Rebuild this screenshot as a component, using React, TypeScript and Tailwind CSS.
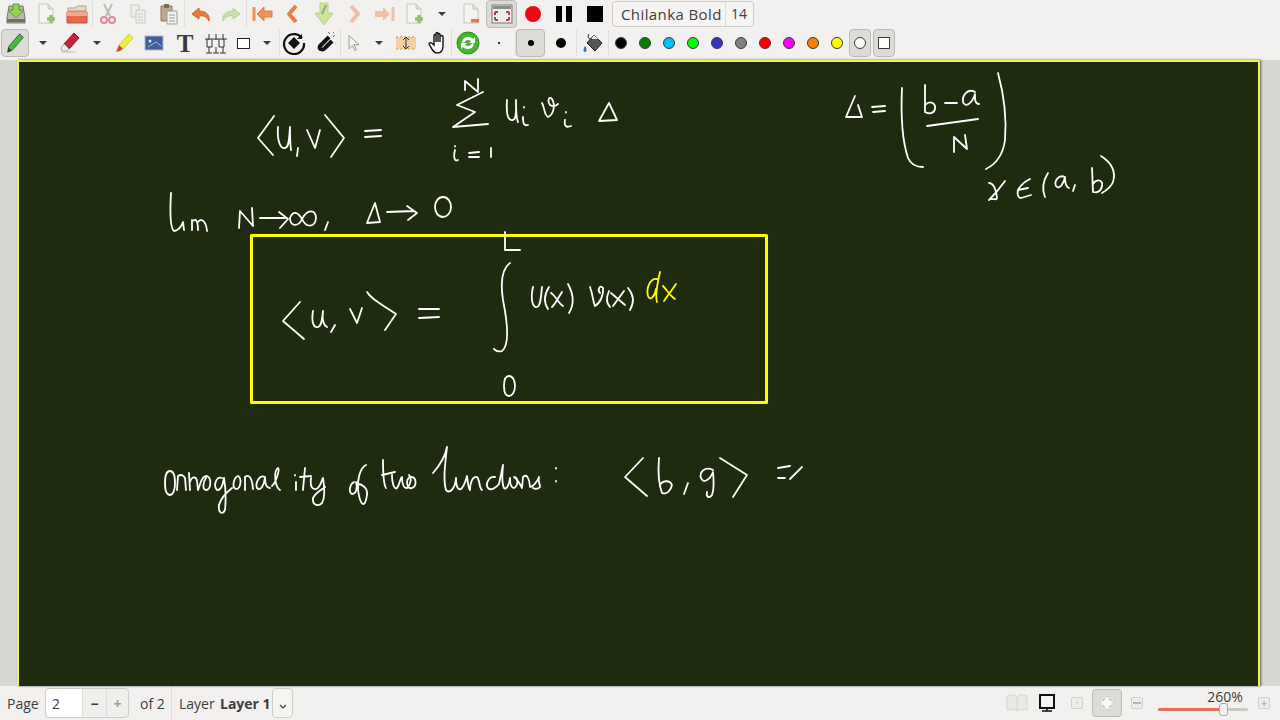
import type { ReactNode } from "react";

const WHITE_INK = [
  // <u,v> = sum
  "M274 116 L258 138 L273 155",
  "M278 127 C277 140 280 149 285 148 C290 147 289 135 290 127 C290 135 290 143 291 150",
  "M298 148 L297 156",
  "M307 130 L315 148 L320 130",
  "M325 115 L344 138 L331 157",
  "M365 131 L381 130 M365 137 L381 136",
  "M465 90 L465 81 L478 92 L478 79",
  "M483 92 L457 105 L475 112 L453 127 L488 124",
  "M507 100 C506 115 508 121 513 120 C517 119 516 108 516 100 C516 110 516 118 518 122",
  "M523 117 C523 124 524 126 528 125 M524 107 L524 107.5",
  "M542 103 C545 108 544 115 548 117 C553 115 556 106 552 99 C549 96 547 100 550 105 C553 107 556 106 558 104",
  "M565 120 C564 126 566 128 571 126 M566 112 L566 112.5",
  "M609 103 L599 121 L617 120 Z",
  "M455 150 C453 158 455 162 458 160 M455 146 L455 146.5",
  "M469 153 L479 152 M469 157 L479 157",
  "M491 148 L491 157",
  // lim
  "M171 193 C170 210 170 228 174 231 C177 231 181 228 183 222 L184 230",
  "M192 220 L192 230 M192 222 C195 218 198 219 198 230 M198 222 C201 218 206 220 207 231",
  "M239 228 L240 211 L253 226 L252 208",
  "M260 218 L285 218 M279 212 L288 219 L280 228",
  "M290 218 C293 210 298 212 302 219 C306 228 315 228 316 218 C316 209 307 209 302 219 C298 228 290 226 290 218",
  "M328 222 L325 230",
  "M375 203 L367 223 L380 222 Z",
  "M387 212 L414 211 M407 206 L417 213 L408 220",
  "M443 197 C448 197 451 202 451 207 C451 213 447 217 443 217 C438 217 435 212 435 207 C435 202 438 197 443 197",
  // boxed integral
  "M505 232 L505 250 L520 250",
  "M510 263 C503 268 500 280 503 300 C507 320 510 345 502 351 C499 352 496 351 494 349",
  "M300 302 L283 321 L304 339",
  "M313 311 C311 323 314 328 318 327 C322 326 322 318 323 311 C322 319 323 325 327 327",
  "M335 325 L331 332",
  "M350 309 L357 323 L362 308",
  "M367 292 C372 300 380 303 396 314 L385 330",
  "M419 309 L439 309 M419 318 L439 317",
  "M533 287 C530 300 533 308 537 307 C541 306 541 295 542 287",
  "M549 287 C544 295 544 303 548 309",
  "M551 293 C556 296 558 303 563 306 M562 292 C558 298 556 303 552 307",
  "M568 284 C574 295 574 305 569 313",
  "M590 287 C593 295 593 302 595 306 C600 303 604 295 603 288 C600 284 597 290 600 293",
  "M609 291 C606 298 606 303 610 307",
  "M611 293 L625 305 M624 291 L613 306",
  "M628 288 C634 295 634 303 630 310",
  "M509 376 C513 376 515 381 515 386 C515 392 512 396 509 396 C505 396 504 391 504 386 C504 381 505 376 509 376",
  // delta definition
  "M855 96 L846 117 L862 117 L858 105",
  "M872 107 L885 106 M873 112 L885 111",
  "M902 88 C901 110 902 140 908 158 C911 165 917 167 923 167",
  "M925 85 L925 112 M925 105 C930 100 936 103 935 109 C934 114 928 114 925 112",
  "M945 103 L957 103",
  "M975 92 C968 88 962 95 963 102 C965 108 972 104 975 94 C975 100 975 104 979 104",
  "M927 126 L978 119",
  "M954 152 L954 137 L967 149 L965 135",
  "M998 73 C1004 95 1007 115 1005 140 C1003 155 996 164 986 169",
  "M989 183 C994 183 996 190 997 198 C997 200 995 199 991 199 M1005 181 C1000 188 994 195 989 200",
  "M1030 179 C1024 182 1020 186 1018 190 L1028 188 M1018 190 C1017 194 1018 198 1021 198 L1031 195",
  "M1048 173 C1043 181 1042 190 1045 197",
  "M1065 177 C1058 174 1054 182 1056 186 C1059 190 1064 184 1065 177 C1065 183 1066 187 1069 188",
  "M1075 185 L1073 191",
  "M1092 168 L1093 192 M1093 184 C1097 178 1103 180 1102 186 C1101 192 1096 193 1093 192",
  "M1101 156 C1112 163 1116 172 1113 182 C1111 187 1107 190 1102 193",
  // orthogonality line
  "M170 471 C174 471 175 477 175 483 C175 490 173 495 170 495 C166 495 165 489 165 483 C165 477 166 471 170 471",
  "M177 490 L178 476 C181 474 183 475 185 478 L186 490 M189 473 L190 490 M190 482 C192 476 196 476 197 481 L198 490 C201 482 202 476 207 476 C212 478 211 490 206 490 C202 490 203 482 206 478",
  "M222 478 C216 476 213 486 217 490 C221 491 223 484 224 478 C226 490 226 500 225 510 C222 516 218 512 219 505 C221 497 227 492 232 488",
  "M238 476 C233 478 232 488 236 489 C241 489 242 478 238 476",
  "M245 490 L245 477 C248 474 252 476 253 489",
  "M265 477 C259 474 255 484 257 488 C261 492 264 484 265 478 C265 484 266 488 270 488",
  "M272 486 C276 482 280 470 278 468 C274 470 274 486 280 490",
  "M295 475 L295 475.5 M296 482 L296 490",
  "M305 468 L303 490 M300 477 L311 476",
  "M311 478 C310 486 312 490 316 489 C320 488 321 482 323 478 C325 490 325 498 322 503 C318 507 312 505 313 498 C316 492 322 490 325 487",
  "M354 482 C350 484 348 492 352 494 C356 494 358 488 356 482",
  "M366 465 C360 468 357 480 358 490 C360 505 365 510 367 495 C368 488 362 484 358 484",
  "M383 460 C383 472 384 485 386 488 M382 475 L395 472",
  "M392 475 C392 485 395 490 397 488 C400 484 400 478 402 477 C402 484 404 489 407 488 C411 484 412 478 409 475",
  "M410 477 C405 480 407 490 412 488 C417 486 417 476 410 477",
  "M433 473 C440 465 445 458 447 447 C445 465 443 480 446 490 C449 494 455 490 456 478 C456 486 458 492 462 488 C465 484 466 480 467 476 C468 482 468 488 470 490 C470 482 473 476 477 477 C480 480 479 488 482 490",
  "M495 477 C489 476 485 484 488 488 C491 491 496 488 499 484 L503 465 C502 475 502 484 504 488 C506 490 509 486 510 478 C510 484 511 488 514 488 C518 486 519 477 514 477 C518 480 520 484 522 488 L523 477 C526 474 529 476 530 487 C533 487 537 482 539 477 C538 482 540 484 540 487 C538 489 535 489 533 488",
  "M556 468 L556 468.5 M556 481 L556 481.5",
  // <f,g> =
  "M643 458 L625 477 L647 496",
  "M659 458 C658 470 659 485 662 493 C667 495 671 490 672 485 C670 480 663 480 660 485",
  "M688 483 L684 494",
  "M713 470 C705 466 699 472 701 478 C703 484 710 480 713 472 C714 482 714 490 712 495 C709 499 706 497 707 492",
  "M720 458 L747 475 L733 497",
  "M778 468 L790 466 M778 478 L785 478 M802 467 L790 479",
];

function Ink() {
  return (
    <svg
      className="pointer-events-none absolute inset-0 h-full w-full"
      viewBox="0 60 1280 626"
      preserveAspectRatio="none"
      fill="none"
      strokeLinecap="round"
      strokeLinejoin="round"
    >
      <rect x="251.5" y="235.5" width="515" height="167" stroke="#ffff00" strokeWidth="3" />
      {WHITE_INK.map((d) => (
        <path key={d} d={d} stroke="#ffffff" strokeWidth="1.8" />
      ))}
      <path
        d="M657 279 C650 278 646 288 648 296 C650 302 655 296 656 289 M660 272 C657 285 655 296 657 302 M663 286 C667 290 670 296 675 299 M676 284 C672 290 668 295 664 301"
        stroke="#ffff00"
        strokeWidth="1.8"
      />
    </svg>
  );
}

function Tool({ w, active, children }: { w: string; active?: boolean; children?: ReactNode }) {
  return (
    <div className={`${w} flex h-full shrink-0 items-center justify-center`}>
      {active ? (
        <div className="flex h-[28px] w-full items-center justify-center rounded-[4px] border border-[#bcbab5] bg-[#dcdbd8]">
          {children}
        </div>
      ) : (
        children
      )}
    </div>
  );
}

function Sep() {
  return <div className="h-[26px] w-px shrink-0 bg-[#dfdedb]" />;
}

function Drop() {
  return <div className="h-0 w-0 border-x-[4px] border-t-[4px] border-x-transparent border-t-[#3c3c3c]" />;
}

function Ico({ children, size = 24 }: { children: ReactNode; size?: number }) {
  return (
    <svg width={size} height={size} viewBox="0 0 24 24" fill="none">
      {children}
    </svg>
  );
}

const Page = ({ plus, red }: { plus?: boolean; red?: boolean }) => (
  <Ico>
    <path d="M5 2 H14 L19 7 V21 H5 Z" fill="#f4f4f2" stroke="#c4c4c0" />
    <path d="M14 2 V7 H19" fill="#dcdcd8" stroke="#c4c4c0" />
    {plus && <path d="M17 13 V21 M13 17 H21" stroke="#8cc06a" strokeWidth="3.4" />}
    {red && <rect x="12" y="17" width="8" height="3.5" fill="#e8735a" />}
  </Ico>
);

function Swatch({ color }: { color: string }) {
  return (
    <Tool w="w-[24px]">
      <div className={`h-[12px] w-[12px] rounded-full border border-[#3a3a3a] ${color}`} />
    </Tool>
  );
}

function TopRow() {
  return (
    <div className="flex h-[28px] items-center pl-[1px]">
      <Tool w="w-[29px]">
        <Ico>
          <path d="M3 16 L5 4 H19 L21 16 V21 H3 Z" fill="#b8b8b4" stroke="#77776f" />
          <path d="M9 2 H15 V8 H20 L12 16 L4 8 H9 Z" fill="#95d552" stroke="#5c9a2a" />
          <rect x="3" y="17" width="18" height="3" fill="#6f6f6a" />
        </Ico>
      </Tool>
      <Tool w="w-[31px]"><Page plus /></Tool>
      <Tool w="w-[31px]">
        <Ico>
          <path d="M3 6 H10 L12 4 H21 V9 H3 Z" fill="#e9d7c8" stroke="#b89d88" />
          <path d="M2 10 H22 V21 H2 Z" fill="#e8684a" stroke="#c05338" />
          <path d="M2 10 H22 V14 H2 Z" fill="#f2a890" />
        </Ico>
      </Tool>
      <Sep />
      <Tool w="w-[30px]">
        <Ico>
          <path d="M8 2 L14 14 M16 2 L10 14" stroke="#bcbcb8" strokeWidth="2" />
          <circle cx="8" cy="18" r="3" stroke="#d98ba0" strokeWidth="2" />
          <circle cx="16" cy="18" r="3" stroke="#d98ba0" strokeWidth="2" />
        </Ico>
      </Tool>
      <Tool w="w-[30px]">
        <Ico>
          <path d="M5 3 H13 V15 H5 Z" fill="#eeeeec" stroke="#c8c8c4" />
          <path d="M10 8 H19 V21 H10 Z" fill="#eeeeec" stroke="#c8c8c4" />
          <path d="M12 12 H17 M12 15 H17 M12 18 H17" stroke="#c8c8c4" />
        </Ico>
      </Tool>
      <Tool w="w-[31px]">
        <Ico>
          <path d="M4 4 H15 V19 H4 Z" fill="#bfa88d" stroke="#8e785f" />
          <rect x="7" y="2" width="5" height="4" fill="#7a6a58" />
          <path d="M10 9 H20 V22 H10 Z" fill="#f2f2f0" stroke="#9a9a96" />
          <path d="M12 13 H18 M12 16 H18 M12 19 H18" stroke="#9a9a96" />
        </Ico>
      </Tool>
      <Sep />
      <Tool w="w-[31px]">
        <Ico>
          <path d="M10 6 L3 12 L10 17 V14 C15 13 18 15 20 19 C21 12 16 9 10 9 Z" fill="#ef7a3c" stroke="#d95f22" />
        </Ico>
      </Tool>
      <Tool w="w-[30px]">
        <Ico>
          <path d="M14 6 L21 12 L14 17 V14 C9 13 6 15 4 19 C3 12 8 9 14 9 Z" fill="#c8e0a8" stroke="#b4d28e" />
        </Ico>
      </Tool>
      <Sep />
      <Tool w="w-[31px]">
        <Ico>
          <path d="M3 5 V19" stroke="#f0905a" strokeWidth="3" />
          <path d="M13 5 L6 12 L13 19 V15 H21 V9 H13 Z" fill="#f0905a" stroke="#e37b40" />
        </Ico>
      </Tool>
      <Tool w="w-[30px]">
        <Ico>
          <path d="M15 4 L8 12 L15 20" stroke="#ec7a45" strokeWidth="4" strokeLinejoin="round" />
        </Ico>
      </Tool>
      <Tool w="w-[31px]">
        <Ico>
          <path d="M8 1 H16 V11 H21 L12 23 L3 11 H8 Z" fill="#cfe49e" stroke="#b7d487" />
          <path d="M14 3 L10 12" stroke="#8cb07a" strokeWidth="2" />
        </Ico>
      </Tool>
      <Tool w="w-[30px]">
        <Ico>
          <path d="M9 4 L16 12 L9 20" stroke="#f3bfa3" strokeWidth="4" strokeLinejoin="round" />
        </Ico>
      </Tool>
      <Tool w="w-[30px]">
        <Ico>
          <path d="M21 5 V19" stroke="#f3bfa3" strokeWidth="3" />
          <path d="M11 5 L18 12 L11 19 V15 H3 V9 H11 Z" fill="#f3bfa3" />
        </Ico>
      </Tool>
      <Tool w="w-[30px]"><Page plus /></Tool>
      <Tool w="w-[26px]"><Drop /></Tool>
      <Tool w="w-[31px]"><Page red /></Tool>
      <Tool w="w-[31px]" active>
        <Ico>
          <rect x="2" y="3" width="20" height="18" fill="#eeeeec" stroke="#77776f" />
          <rect x="3" y="4" width="18" height="3" fill="#8d8d85" />
          <path d="M5 10 H8 M5 10 V13 M19 10 H16 M19 10 V13 M5 18 H8 M5 18 V15 M19 18 H16 M19 18 V15" stroke="#b0404a" strokeWidth="2" />
        </Ico>
      </Tool>
      <Tool w="w-[32px]"><div className="h-[16px] w-[16px] rounded-full bg-[#ee0a14]" /></Tool>
      <Tool w="w-[30px]">
        <div className="flex gap-[4px]">
          <div className="h-[16px] w-[6px] bg-black" />
          <div className="h-[16px] w-[6px] bg-black" />
        </div>
      </Tool>
      <Tool w="w-[31px]"><div className="h-[16px] w-[16px] bg-black" /></Tool>
      <div className="ml-[2px] flex h-[26px] w-[142px] shrink-0 items-center rounded-[4px] border border-[#cfcdc8] bg-[#f6f5f4] font-['Open_Sans',sans-serif] text-[15px] text-[#3d3d3d]">
        <span className="w-[112px] whitespace-nowrap pl-[8px] tracking-[0.4px]">Chilanka Bold</span>
        <span className="flex h-full items-center border-l border-[#dedcd8] pl-[5px] text-[14px] leading-[30px]">14</span>
      </div>
    </div>
  );
}

function BottomRow() {
  return (
    <div className="mb-[2px] flex h-[30px] items-center pl-[1px]">
      <Tool w="w-[28px]" active>
        <Ico size={22}>
          <path d="M17 2 L21 6 L9 20 L4 22 L5 16 Z" fill="#49b84a" stroke="#2a6e2c" />
          <path d="M4 22 L5 17 L8 20 Z" fill="#333" />
        </Ico>
      </Tool>
      <Tool w="w-[27px]"><Drop /></Tool>
      <Tool w="w-[28px]">
        <Ico>
          <path d="M16 2 L21 7 L11 18 L6 13 Z" fill="#c9213a" stroke="#8e1426" />
          <path d="M6 13 L11 18 L9 20 H4 L3 17 Z" fill="#f0f0ee" stroke="#aaa" />
          <path d="M3 21 H18" stroke="#c0c0bc" />
        </Ico>
      </Tool>
      <Tool w="w-[26px]"><Drop /></Tool>
      <Tool w="w-[28px]">
        <Ico>
          <path d="M17 3 L21 7 L11 18 L7 14 Z" fill="#eef03c" stroke="#cfd12e" />
          <path d="M7 14 L11 18 L8 20 L4 21 Z" fill="#c6502a" />
        </Ico>
      </Tool>
      <Tool w="w-[31px]">
        <Ico>
          <rect x="3" y="5" width="18" height="14" fill="#3f5f98" stroke="#b7bcc6" />
          <circle cx="8" cy="10" r="1.5" fill="#dfe6f4" />
          <path d="M6 16 L14 11 L19 15" stroke="#a8c0e6" />
        </Ico>
      </Tool>
      <Tool w="w-[32px]">
        <span className="font-['Liberation_Serif',serif] text-[25px] font-bold leading-none text-[#3a3a3a]">T</span>
      </Tool>
      <Tool w="w-[30px]">
        <Ico>
          <path d="M1 8 H23 M5 3 V9 M12 3 V9 M19 3 V9 M5 16 V22 M12 16 V22 M19 16 V22 M2 22 H8 M9 22 H15 M16 22 H22" stroke="#333" strokeWidth="1" />
          <path d="M3 8 V16 H8 V8 M15 8 V16 H20 V8" stroke="#333" strokeWidth="1" />
        </Ico>
      </Tool>
      <Tool w="w-[24px]">
        <div className="h-[11px] w-[13px] border-[1.5px] border-[#222] bg-white" />
      </Tool>
      <Tool w="w-[24px]"><Drop /></Tool>
      <Sep />
      <Tool w="w-[28px]">
        <Ico>
          <path d="M20 7 A10 10 0 1 0 22 12" stroke="#111" strokeWidth="2.2" />
          <path d="M12 6 L18 12 L12 18 L6 12 Z" fill="#111" />
          <path d="M20 3 V8 H15" fill="#111" />
        </Ico>
      </Tool>
      <Tool w="w-[32px]">
        <Ico>
          <path d="M17 6 L8 15 C6 18 11 20 13 17 L20 10" stroke="#111" strokeWidth="4" />
          <path d="M18 3 L16 1 M21 6 L23 4 M21 2 L22 1" stroke="#777" />
        </Ico>
      </Tool>
      <Sep />
      <Tool w="w-[25px]">
        <Ico size={20}>
          <path d="M6 3 V19 L10 15 L13 21 L15 20 L12 14 H18 Z" fill="#f4f4f2" stroke="#8a8a86" />
        </Ico>
      </Tool>
      <Tool w="w-[25px]"><Drop /></Tool>
      <Tool w="w-[29px]">
        <Ico>
          <rect x="2" y="6" width="20" height="12" fill="#f3cfa4" />
          <path d="M2 6 H22 M2 18 H22" stroke="#d98f4a" strokeDasharray="2 2" />
          <path d="M12 6 V18 M9 9 L12 6 L15 9 M9 15 L12 18 L15 15" stroke="#333" />
        </Ico>
      </Tool>
      <div className="w-[7px] shrink-0" />
      <Tool w="w-[24px]">
        <Ico>
          <path d="M7 12 V5 C7 3 9 3 9 5 V11 V3 C9 1 11 1 11 3 V11 V4 C11 2 13 2 13 4 V11 V6 C13 4 16 4 16 6 V15 C16 20 13 22 10 22 C6 22 5 18 2 13 C2 11 4 11 7 14 Z" fill="#ffffff" stroke="#111" strokeWidth="1.4" />
        </Ico>
      </Tool>
      <Sep />
      <Tool w="w-[31px]">
        <Ico>
          <circle cx="12" cy="12" r="11" fill="#45b52e" stroke="#2d8a1b" />
          <path d="M6 11 C7 6 13 4 17 8 L19 6 V12 H13 L15 10 C12 8 9 9 8 12 Z M18 13 C17 18 11 20 7 16 L5 18 V12 H11 L9 14 C12 16 15 15 16 12 Z" fill="#ffffff" />
        </Ico>
      </Tool>
      <Tool w="w-[32px]">
        <div className="h-[2px] w-[2px] rounded-full bg-black" />
      </Tool>
      <Sep />
      <Tool w="w-[29px]" active>
        <div className="h-[6px] w-[6px] rounded-full bg-black" />
      </Tool>
      <Tool w="w-[31px]">
        <div className="h-[10px] w-[10px] rounded-full bg-black" />
      </Tool>
      <Sep />
      <Tool w="w-[31px]">
        <Ico>
          <path d="M13 4 L21 12 L14 20 L6 12 Z" fill="#555" stroke="#222" />
          <path d="M13 4 L17 8 L10 8 Z" fill="#eee" />
          <path d="M8 3 C6 6 8 9 11 8" stroke="#222" />
          <path d="M4 15 C2 18 2 21 4 21 C6 21 6 18 4 15 Z" fill="#3a6fc4" />
        </Ico>
      </Tool>
      <Sep />
      <Swatch color="bg-black" />
      <Swatch color="bg-[#008000]" />
      <Swatch color="bg-[#00c0ff]" />
      <Swatch color="bg-[#00ff00]" />
      <Swatch color="bg-[#3333cc]" />
      <Swatch color="bg-[#808080]" />
      <Swatch color="bg-[#ff0000]" />
      <Swatch color="bg-[#ff00ff]" />
      <Swatch color="bg-[#ff8000]" />
      <Swatch color="bg-[#ffff00]" />
      <Tool w="w-[22px]" active>
        <div className="h-[12px] w-[12px] rounded-full border border-[#3a3a3a] bg-white" />
      </Tool>
      <div className="w-[2px] shrink-0" />
      <Tool w="w-[22px]" active>
        <div className="h-[12px] w-[12px] border border-[#3a3a3a] bg-white" />
      </Tool>
    </div>
  );
}

function StatusBar() {
  return (
    <div className="flex h-[34px] shrink-0 items-center bg-[#f2f1ef] font-['Open_Sans',sans-serif] text-[14px] text-[#3d3d3d]">
      <span className="ml-[7px] w-[38px]">Page</span>
      <div className="flex h-[30px] w-[84px] items-stretch rounded-[4px] border border-[#cfcdc8] bg-[#f0efed]">
        <span className="flex w-[36px] items-center rounded-l-[4px] bg-white pl-[6px]">2</span>
        <span className="flex w-[24px] items-center justify-center border-l border-[#dedcd8] font-bold">−</span>
        <span className="flex flex-1 items-center justify-center border-l border-[#dedcd8] font-bold text-[#9a9a96]">+</span>
      </div>
      <span className="ml-[11px] w-[31px] whitespace-nowrap">of 2</span>
      <div className="h-full w-px bg-[#dfdedb]" />
      <span className="ml-[7px] w-[41px]">Layer</span>
      <span className="w-[52px] whitespace-nowrap font-bold">Layer 1</span>
      <div className="flex h-[30px] w-[21px] items-center justify-center rounded-[4px] border border-[#cfcdc8] bg-[#f6f5f4] pt-[6px]">
        <svg width="8" height="5" viewBox="0 0 8 5" fill="none">
          <path d="M1 1 L4 4 L7 1" stroke="#3d3d3d" strokeWidth="1.2" />
        </svg>
      </div>
      <div className="flex-1" />
      <Tool w="w-[30px]">
        <Ico>
          <path d="M2 5 C6 3 10 4 12 6 C14 4 18 3 22 5 V19 C18 18 14 18 12 20 C10 18 6 18 2 19 Z" fill="#e9e9e6" stroke="#d5d5d1" />
          <path d="M12 6 V20" stroke="#d5d5d1" />
        </Ico>
      </Tool>
      <Tool w="w-[30px]">
        <Ico>
          <rect x="5" y="4" width="14" height="13" fill="#f4f4f2" stroke="#111" strokeWidth="2" />
          <path d="M12 17 V20 M7 20 H17" stroke="#111" strokeWidth="1.6" />
        </Ico>
      </Tool>
      <Tool w="w-[30px]">
        <div className="flex h-[12px] w-[12px] items-center justify-center rounded-[2px] border border-[#cfcfcb] bg-[#ececea] text-[8px] leading-none text-[#bbbbb7]">↑</div>
      </Tool>
      <Tool w="w-[30px]" active>
        <Ico size={16}>
          <rect x="3" y="3" width="18" height="18" rx="3" fill="#f6f6f4" stroke="#c8c8c4" />
          <path d="M6 9 V6 H9 M18 9 V6 H15 M6 15 V18 H9 M18 15 V18 H15" stroke="#a8a8a4" strokeWidth="1.5" />
        </Ico>
      </Tool>
      <Tool w="w-[30px]">
        <div className="flex h-[12px] w-[12px] items-center justify-center rounded-[2px] border border-[#cfcfcb] bg-[#ececea]">
          <div className="h-[2px] w-[8px] bg-[#b5b5b1]" />
        </div>
      </Tool>
      <div className="ml-[4px] flex h-full w-[94px] flex-col items-center">
        <span className="mt-[2px] ml-[44px] whitespace-nowrap text-[14px] leading-[17px]">260%</span>
        <div className="relative mt-[3px] h-[3px] w-[90px] rounded-full bg-[#c8c8c4]">
          <div className="h-full w-[66px] rounded-l-full bg-[#e0705c]" />
          <div className="absolute left-[61px] top-[-5px] h-[13px] w-[9px] rounded-[3px] border border-[#a9a7a2] bg-[#f4f3f1]" />
        </div>
      </div>
      <div className="flex w-[28px] justify-center">
        <div className="flex h-[12px] w-[12px] items-center justify-center rounded-[2px] border border-[#cfcfcb] bg-[#ececea] text-[10px] font-bold leading-none text-[#b5b5b1]">+</div>
      </div>
      <div className="w-[2px]" />
    </div>
  );
}

export default function App() {
  return (
    <div className="flex h-screen w-[1280px] flex-col overflow-hidden bg-[#f2f1ef]">
      <TopRow />
      <BottomRow />
      <div className="relative flex min-h-0 flex-1 bg-[#d6d6d2]">
        <div className="ml-[17px] w-[1243px] shrink-0 border-x-2 border-t-2 border-[#f2f25a] bg-[#1f2b0e] shadow-[1px_0_2px_#555]" />
        <Ink />
      </div>
      <StatusBar />
    </div>
  );
}
